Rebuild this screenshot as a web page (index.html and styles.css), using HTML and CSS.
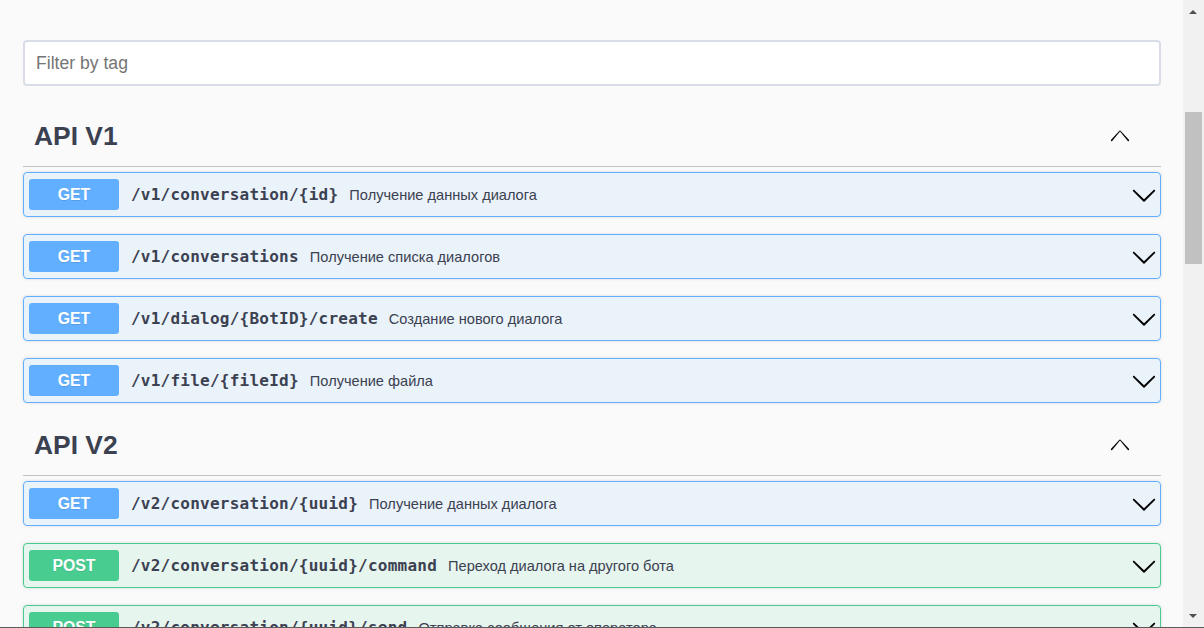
FILE: index.html
```html
<!DOCTYPE html>
<html lang="ru">
<head>
<meta charset="utf-8">
<title>Swagger UI</title>
<link rel="stylesheet" href="styles.css">
</head>
<body>
<div class="window">
  <main class="page">
    <div class="filter">
      <input class="filter-input" type="text" placeholder="Filter by tag">
    </div>

    <section class="tag-section">
      <h3 class="tag-header">
        <span class="tag-name">API V1</span>
        <svg class="tag-arrow" viewBox="0 0 20 20"><path d="M17.418 14.908c-.274.301-.646.301-.921 0L10 7.183 3.503 14.908c-.275.301-.646.301-.92 0a.646.646 0 0 1 0-.879l6.95-7.597a.6.6 0 0 1 .888 0l6.997 7.597a.646.646 0 0 1 0 .879z"/></svg>
      </h3>
      <div class="op op-get">
        <span class="method">GET</span>
        <span class="path">/v1/conversation/{id}</span>
        <span class="desc">Получение данных диалога</span>
        <svg class="op-arrow" viewBox="0 0 20 20"><path d="M17.418 6.109c.272-.268.709-.268.979 0s.271.701 0 .969l-7.908 7.83c-.27.268-.707.268-.979 0l-7.908-7.830c-.27-.268-.27-.701 0-.969.271-.268.709-.268.979 0L10 13.25l7.418-7.141z"/></svg>
      </div>
      <div class="op op-get">
        <span class="method">GET</span>
        <span class="path">/v1/conversations</span>
        <span class="desc">Получение списка диалогов</span>
        <svg class="op-arrow" viewBox="0 0 20 20"><path d="M17.418 6.109c.272-.268.709-.268.979 0s.271.701 0 .969l-7.908 7.83c-.27.268-.707.268-.979 0l-7.908-7.83c-.27-.268-.27-.701 0-.969.271-.268.709-.268.979 0L10 13.25l7.418-7.141z"/></svg>
      </div>
      <div class="op op-get">
        <span class="method">GET</span>
        <span class="path">/v1/dialog/{BotID}/create</span>
        <span class="desc">Создание нового диалога</span>
        <svg class="op-arrow" viewBox="0 0 20 20"><path d="M17.418 6.109c.272-.268.709-.268.979 0s.271.701 0 .969l-7.908 7.83c-.27.268-.707.268-.979 0l-7.908-7.83c-.27-.268-.27-.701 0-.969.271-.268.709-.268.979 0L10 13.25l7.418-7.141z"/></svg>
      </div>
      <div class="op op-get">
        <span class="method">GET</span>
        <span class="path">/v1/file/{fileId}</span>
        <span class="desc">Получение файла</span>
        <svg class="op-arrow" viewBox="0 0 20 20"><path d="M17.418 6.109c.272-.268.709-.268.979 0s.271.701 0 .969l-7.908 7.83c-.27.268-.707.268-.979 0l-7.908-7.83c-.27-.268-.27-.701 0-.969.271-.268.709-.268.979 0L10 13.25l7.418-7.141z"/></svg>
      </div>
    </section>

    <section class="tag-section">
      <h3 class="tag-header">
        <span class="tag-name">API V2</span>
        <svg class="tag-arrow" viewBox="0 0 20 20"><path d="M17.418 14.908c-.274.301-.646.301-.921 0L10 7.183 3.503 14.908c-.275.301-.646.301-.92 0a.646.646 0 0 1 0-.879l6.95-7.597a.6.6 0 0 1 .888 0l6.997 7.597a.646.646 0 0 1 0 .879z"/></svg>
      </h3>
      <div class="op op-get">
        <span class="method">GET</span>
        <span class="path">/v2/conversation/{uuid}</span>
        <span class="desc">Получение данных диалога</span>
        <svg class="op-arrow" viewBox="0 0 20 20"><path d="M17.418 6.109c.272-.268.709-.268.979 0s.271.701 0 .969l-7.908 7.83c-.27.268-.707.268-.979 0l-7.908-7.83c-.27-.268-.27-.701 0-.969.271-.268.709-.268.979 0L10 13.25l7.418-7.141z"/></svg>
      </div>
      <div class="op op-post">
        <span class="method">POST</span>
        <span class="path">/v2/conversation/{uuid}/command</span>
        <span class="desc">Переход диалога на другого бота</span>
        <svg class="op-arrow" viewBox="0 0 20 20"><path d="M17.418 6.109c.272-.268.709-.268.979 0s.271.701 0 .969l-7.908 7.83c-.27.268-.707.268-.979 0l-7.908-7.83c-.27-.268-.27-.701 0-.969.271-.268.709-.268.979 0L10 13.25l7.418-7.141z"/></svg>
      </div>
      <div class="op op-post">
        <span class="method">POST</span>
        <span class="path">/v2/conversation/{uuid}/send</span>
        <span class="desc">Отправка сообщения от оператора</span>
        <svg class="op-arrow" viewBox="0 0 20 20"><path d="M17.418 6.109c.272-.268.709-.268.979 0s.271.701 0 .969l-7.908 7.83c-.27.268-.707.268-.979 0l-7.908-7.83c-.27-.268-.27-.701 0-.969.271-.268.709-.268.979 0L10 13.25l7.418-7.141z"/></svg>
      </div>
    </section>
  </main>

  <div class="scrollbar">
    <div class="sb-btn"><span class="tri-up"></span></div>
    <div class="sb-track">
      <div class="sb-thumb"></div>
    </div>
    <div class="sb-btn"><span class="tri-down"></span></div>
  </div>
</div>
<div class="bottom-edge"></div>
</body>
</html>
```

FILE: styles.css
```css
html, body {
  margin: 0;
  padding: 0;
}

body {
  background: #fafafa;
  font-family: "Liberation Sans", Arial, sans-serif;
  color: #3b4151;
  height: 628px;
  overflow: hidden;
  display: flex;
  flex-direction: column;
}

.window {
  display: flex;
  height: 627px;
  overflow: hidden;
}

.page {
  flex: 1;
  min-width: 0;
  padding: 40px 22px 0 23px;
  overflow: hidden;
}

.bottom-edge {
  height: 1px;
  background: #5b5b5b;
}

/* filter */
.filter {
  margin-bottom: 25px;
}

.filter-input {
  display: block;
  box-sizing: border-box;
  width: 100%;
  height: 46px;
  margin: 0;
  padding: 0 11px;
  border: 2px solid #d8dde7;
  border-radius: 4px;
  background: #fff;
  font-family: "Liberation Sans", Arial, sans-serif;
  font-size: 17.6px;
  color: #3b4151;
  outline: none;
}

.filter-input::placeholder {
  color: #757575;
}

/* tag headers */
.tag-header {
  display: flex;
  align-items: center;
  box-sizing: border-box;
  height: 56px;
  margin: 0 0 5px;
  padding: 0 29px 5px 11px;
  border-bottom: 1px solid rgba(59, 65, 81, 0.3);
  font-size: 26.4px;
  font-weight: bold;
  color: #3b4151;
}

.tag-name {
  flex: 1;
}

.tag-arrow {
  width: 24px;
  height: 24px;
  fill: #000;
  margin-bottom: 2px;
}

/* operations */
.op {
  display: flex;
  align-items: center;
  box-sizing: border-box;
  height: 45px;
  margin-bottom: 17px;
  padding: 0 5px 0 5px;
  border: 1px solid;
  border-radius: 4px;
  box-shadow: 0 0 3px rgba(0, 0, 0, 0.15);
}

.op-get {
  border-color: #61affe;
  background: rgba(97, 175, 254, 0.1);
}

.op-post {
  border-color: #49cc90;
  background: rgba(73, 204, 144, 0.1);
}

.method {
  flex: none;
  width: 90px;
  height: 31px;
  line-height: 31px;
  border-radius: 3px;
  text-align: center;
  color: #fff;
  font-size: 15.8px;
  font-weight: bold;
  text-shadow: 0 1px 0 rgba(0, 0, 0, 0.1);
}

.op-get .method {
  background: #61affe;
}

.op-post .method {
  background: #49cc90;
}

.path {
  flex: none;
  margin-left: 12px;
  font-family: "DejaVu Sans Mono", "Liberation Mono", monospace;
  font-weight: bold;
  font-size: 16px;
  letter-spacing: 0.24px;
  color: #3b4151;
}

.desc {
  flex: 1;
  margin-left: 11px;
  font-size: 14.6px;
  color: #3b4151;
  white-space: nowrap;
}

.op-arrow {
  flex: none;
  width: 26px;
  height: 26px;
  fill: #000;
  margin-right: -2px;
}

/* scrollbar */
.scrollbar {
  flex: none;
  width: 21px;
  background: #f1f1f1;
  display: flex;
  flex-direction: column;
}

.sb-btn {
  height: 23px;
  display: flex;
  align-items: center;
  justify-content: center;
  padding-right: 1px;
}

.tri-up {
  width: 0;
  height: 0;
  border-left: 4px solid transparent;
  border-right: 4px solid transparent;
  border-bottom: 4px solid #505050;
}

.tri-down {
  width: 0;
  height: 0;
  border-left: 4px solid transparent;
  border-right: 4px solid transparent;
  border-top: 4px solid #505050;
}

.sb-track {
  flex: 1;
  padding-top: 89px;
}

.sb-thumb {
  width: 17px;
  height: 152px;
  margin-left: 2px;
  background: #c1c1c1;
}
```
